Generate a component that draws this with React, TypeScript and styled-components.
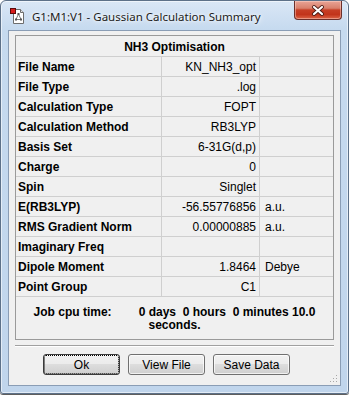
import React from "react";
import styled, { createGlobalStyle } from "styled-components";

const Global = createGlobalStyle`
  html, body { margin: 0; padding: 0; background: #ffffff; }
  body { width: 349px; height: 395px; overflow: hidden; }
  * { box-sizing: border-box; }
`;

const Window = styled.div`
  width: 349px;
  height: 394px;
  border: 1px solid #5d7189;
  border-radius: 6px 6px 3px 3px;
  background: linear-gradient(#dae7f6 0px, #c6daef 28px, #c0d5ec 100%);
  box-shadow: inset 0 0 0 1px rgba(255, 255, 255, 0.55), 0 1px 1px rgba(0, 0, 0, 0.7);
  display: flex;
  flex-direction: column;
  font-family: "Liberation Sans", Arial, sans-serif;
`;

const TitleBar = styled.div`
  height: 29px;
  flex: none;
  display: flex;
  align-items: center;
  padding-left: 9px;
  padding-right: 6px;
`;

const TitleText = styled.div`
  margin-left: 6px;
  font-family: "Noto Sans", "Open Sans", sans-serif;
  font-size: 11.5px;
  color: #1b1b1b;
  text-shadow: 0 0 6px #ffffff, 0 0 3px #ffffff;
  margin-top: 1px;
`;

const CloseButton = styled.div`
  margin-left: auto;
  align-self: flex-start;
  width: 48px;
  height: 19px;
  border: 1px solid #6b2f2a;
  border-top: none;
  border-radius: 0 0 4px 4px;
  background: linear-gradient(#e9a496 0%, #d8806c 40%, #c73f25 50%, #c2341b 75%, #dc6446 100%);
  box-shadow: inset 0 0 0 1px rgba(255, 220, 210, 0.45);
  display: flex;
  align-items: center;
  justify-content: center;
`;

const Client = styled.div`
  flex: 1;
  margin: 0 7px 7px 7px;
  border: 1px solid #8a9db5;
  background: #f0f0f0;
  padding: 4px 6px 10px 6px;
  display: flex;
  flex-direction: column;
  position: relative;
`;

const Grid = styled.div`
  display: grid;
  grid-template-columns: 145px 97px 73px;
  grid-template-rows: 20px repeat(12, 19px) 42px;
  gap: 1px;
  background: #cfcfcf;
  border: 1px solid #9a9a9a;
  width: 319px;
`;

const HeaderCell = styled.div`
  grid-column: 1 / 4;
  background: #f0f0f0;
  display: flex;
  align-items: center;
  justify-content: center;
  font-weight: bold;
  font-size: 12px;
  color: #000;
  padding-top: 1px;
`;

const LabelCell = styled.div`
  background: #f0f0f0;
  display: flex;
  align-items: center;
  padding-left: 2px;
  font-weight: bold;
  font-size: 12px;
  color: #000;
  white-space: nowrap;
`;

const ValueCell = styled.div`
  background: #f0f0f0;
  display: flex;
  align-items: center;
  justify-content: flex-end;
  padding-right: 3px;
  font-size: 12px;
  color: #000;
  white-space: nowrap;
`;

const UnitCell = styled.div`
  background: #f0f0f0;
  display: flex;
  align-items: center;
  padding-left: 5px;
  font-size: 12px;
  color: #000;
  white-space: nowrap;
`;

const CpuCell = styled.div`
  grid-column: 1 / 4;
  background: #f0f0f0;
  display: flex;
  flex-direction: column;
  align-items: center;
  justify-content: center;
  font-weight: bold;
  font-size: 12px;
  line-height: 13px;
  color: #000;
  white-space: pre;
  padding-top: 1px;
`;

const CpuLine = styled.div`
  display: flex;
`;

const CpuLabel = styled.span`
  margin-right: 27px;
`;

const Separator = styled.div`
  margin-top: 5px;
  width: 319px;
  height: 2px;
  border-top: 1px solid #a0a0a0;
  border-bottom: 1px solid #ffffff;
`;

const ButtonRow = styled.div`
  margin-top: 7px;
  padding-left: 28px;
  display: flex;
  gap: 8px;
`;

const Button = styled.div<{ $default?: boolean }>`
  width: 77px;
  height: 21px;
  border: 1px solid ${(p) => (p.$default ? "#3a3a3a" : "#707070")};
  border-radius: 3px;
  background: linear-gradient(#f2f2f2 0%, #ebebeb 50%, #dddddd 50%, #cfcfcf 100%);
  box-shadow: inset 0 0 0 1px rgba(255, 255, 255, 0.7);
  display: flex;
  align-items: center;
  justify-content: center;
  font-size: 12px;
  color: #000;
  outline: ${(p) => (p.$default ? "1px dotted #000" : "none")};
  outline-offset: -2px;
`;

const Grip = styled.svg`
  position: absolute;
  right: 2px;
  bottom: 2px;
`;

const rows: { label: string; value: string; unit?: string }[] = [
  { label: "File Name", value: "KN_NH3_opt" },
  { label: "File Type", value: ".log" },
  { label: "Calculation Type", value: "FOPT" },
  { label: "Calculation Method", value: "RB3LYP" },
  { label: "Basis Set", value: "6-31G(d,p)" },
  { label: "Charge", value: "0" },
  { label: "Spin", value: "Singlet" },
  { label: "E(RB3LYP)", value: "-56.55776856", unit: "a.u." },
  { label: "RMS Gradient Norm", value: "0.00000885", unit: "a.u." },
  { label: "Imaginary Freq", value: "" },
  { label: "Dipole Moment", value: "1.8464", unit: "Debye" },
  { label: "Point Group", value: "C1" },
];

const AppIcon = () => (
  <svg width="16" height="16" viewBox="0 0 16 16">
    <path d="M3.5 1.5 H10.5 L13.5 4.5 V15.5 H3.5 Z" fill="#ffffff" stroke="#6d6d6d" />
    <path d="M10.5 1.5 V4.5 H13.5" fill="#e6e6e6" stroke="#6d6d6d" />
    <rect x="0.5" y="0.5" width="5" height="5" fill="#d81b1b" stroke="#5a0a0a" />
    <path d="M8.5 6 L6 11.5 M8.5 6 L11 11.5 M6 11.5 H11" stroke="#7a7a7a" strokeWidth="1" fill="none" />
    <rect x="7.5" y="5" width="2" height="2" fill="#555" />
    <rect x="5" y="10.5" width="2" height="2" fill="#555" />
    <rect x="10" y="10.5" width="2" height="2" fill="#555" />
  </svg>
);

const CloseX = () => (
  <svg width="14" height="11" viewBox="0 0 14 11">
    <path d="M3 2 L11 9 M11 2 L3 9" stroke="#4a1a14" strokeWidth="3.8" strokeLinecap="round" />
    <path d="M3 2 L11 9 M11 2 L3 9" stroke="#ffffff" strokeWidth="2.2" strokeLinecap="round" />
  </svg>
);

export default function App() {
  return (
    <>
      <Global />
      <Window>
        <TitleBar>
          <AppIcon />
          <TitleText>G1:M1:V1 - Gaussian Calculation Summary</TitleText>
          <CloseButton>
            <CloseX />
          </CloseButton>
        </TitleBar>
        <Client>
          <Grid>
            <HeaderCell>NH3 Optimisation</HeaderCell>
            {rows.map((r) => (
              <React.Fragment key={r.label}>
                <LabelCell>{r.label}</LabelCell>
                <ValueCell>{r.value}</ValueCell>
                <UnitCell>{r.unit ?? ""}</UnitCell>
              </React.Fragment>
            ))}
            <CpuCell>
              <CpuLine>
                <CpuLabel>Job cpu time:</CpuLabel>
                <span>{"0 days  0 hours  0 minutes 10.0"}</span>
              </CpuLine>
              <div>seconds.</div>
            </CpuCell>
          </Grid>
          <Separator />
          <ButtonRow>
            <Button $default>Ok</Button>
            <Button>View File</Button>
            <Button>Save Data</Button>
          </ButtonRow>
          <Grip width="8" height="8" viewBox="0 0 8 8">
            <rect x="6" y="0" width="1" height="1" fill="#a8a8a8" />
            <rect x="3" y="3" width="1" height="1" fill="#a8a8a8" />
            <rect x="6" y="3" width="1" height="1" fill="#a8a8a8" />
            <rect x="0" y="6" width="1" height="1" fill="#a8a8a8" />
            <rect x="3" y="6" width="1" height="1" fill="#a8a8a8" />
            <rect x="6" y="6" width="1" height="1" fill="#a8a8a8" />
          </Grip>
        </Client>
      </Window>
    </>
  );
}
